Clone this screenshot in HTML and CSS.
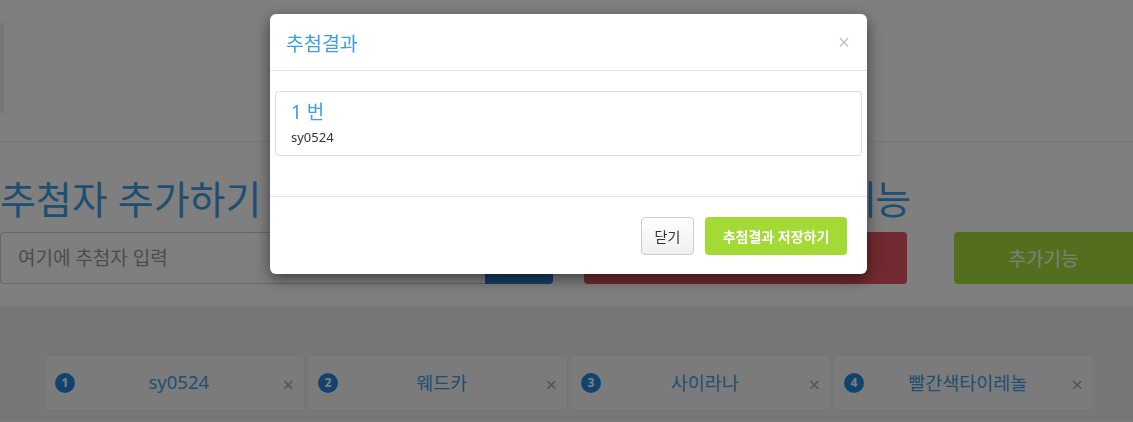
FILE: index.html
```html
<!DOCTYPE html>
<html lang="ko">

<head>
    <meta charset="UTF-8">
    <meta name="viewport" content="width=device-width, initial-scale=1.0">
    <title>추첨기</title>
    <link rel="stylesheet" href="styles.css">
</head>

<body>

    <div class="top-area">
        <div class="side-tab"></div>
    </div>

    <div class="controls">
        <div class="col col-left">
            <h1>추첨자 추가하기</h1>
            <div class="input-group">
                <input type="text" class="name-input" placeholder="여기에 추첨자 입력">
                <button class="add-button"></button>
            </div>
        </div>
        <div class="col col-right">
            <h1 class="tight">추첨하기 및 추가기능</h1>
            <div class="button-row">
                <button class="draw-button"></button>
                <button class="extra-button">추가기능</button>
            </div>
        </div>
    </div>

    <div class="list-panel">
        <div class="card-row">
            <div class="card"><span class="badge">1</span><span class="name">sy0524</span><span class="remove">&times;</span></div>
            <div class="card"><span class="badge">2</span><span class="name">웨드카</span><span class="remove">&times;</span></div>
            <div class="card"><span class="badge">3</span><span class="name">사이라나</span><span class="remove">&times;</span></div>
            <div class="card"><span class="badge">4</span><span class="name">빨간색타이레놀</span><span class="remove">&times;</span></div>
        </div>
    </div>

    <div class="backdrop"></div>

    <div class="modal">
        <div class="modal-header">
            <h4 class="modal-title">추첨결과</h4>
            <span class="close">&times;</span>
        </div>
        <div class="modal-body">
            <div class="result-panel">
                <div class="result-rank">1 번</div>
                <div class="result-name">sy0524</div>
            </div>
        </div>
        <div class="modal-footer">
            <button class="btn-close">닫기</button>
            <button class="btn-save">추첨결과 저장하기</button>
        </div>
    </div>

</body>

</html>
```

FILE: styles.css
```css
body {
    font-family: "Noto Sans", "Noto Sans CJK KR", sans-serif;
    background-color: #fff;
    margin: 0;
    padding: 0;
    height: 422px;
    overflow: hidden;
}

.top-area {
    height: 142px;
    border-bottom: 1px solid #ededed;
    padding-top: 23px;
    box-sizing: border-box;
}

.side-tab {
    width: 4px;
    height: 90px;
    background-color: #ececec;
}

.controls {
    display: flex;
    gap: 31px;
    padding-top: 36px;
}

.col-left {
    width: 553px;
}

.col-right {
    flex: 1;
}

h1 {
    margin: 0 0 11px 0;
    font-size: 39px;
    font-weight: 400;
    line-height: 1.1;
    color: #3d9fe6;
    white-space: nowrap;
}

h1.tight {
    letter-spacing: -1.6px;
}

.input-group {
    display: flex;
    height: 52px;
}

.name-input {
    flex: 1;
    border: 1px solid #ccc;
    border-right: none;
    border-radius: 4px 0 0 4px;
    padding: 0 17px;
    font-family: inherit;
    font-size: 19px;
    color: #555;
    outline: none;
}

.name-input::placeholder {
    color: #999;
}

.add-button {
    width: 68px;
    border: none;
    border-radius: 0 4px 4px 0;
    background-color: #2a7cc6;
}

.button-row {
    display: flex;
    gap: 47px;
    height: 52px;
}

.draw-button,
.extra-button {
    border: none;
    border-radius: 4px;
    font-family: inherit;
    font-size: 19px;
    color: #fff;
}

.draw-button {
    width: 323px;
    background-color: #e3545e;
}

.extra-button {
    flex: 1;
    background-color: #a6df3c;
    border-radius: 4px 0 0 4px;
}

.list-panel {
    margin-top: 22px;
    background-color: #eeeeee;
    padding: 49px 0 0 44px;
    height: 66px;
}

.card-row {
    display: flex;
    gap: 2px;
}

.card {
    width: 261px;
    height: 56px;
    box-sizing: border-box;
    background-color: #f7f7f7;
    border: 1px solid #e8e8e8;
    border-radius: 3px;
    display: flex;
    align-items: center;
    padding: 0 10px;
}

.badge {
    width: 20px;
    height: 20px;
    border-radius: 50%;
    background-color: #2189dc;
    color: #fff;
    font-size: 12px;
    font-weight: 700;
    display: flex;
    align-items: center;
    justify-content: center;
    flex-shrink: 0;
}

.name {
    flex: 1;
    text-align: center;
    font-size: 18.5px;
    color: #3d9fe6;
    margin-top: -2px;
}

.remove {
    font-size: 20px;
    color: #aaa;
    margin-top: 4px;
}

.backdrop {
    position: fixed;
    top: 0;
    left: 0;
    right: 0;
    bottom: 0;
    background-color: rgba(0, 0, 0, 0.5);
}

.modal {
    position: absolute;
    top: 14px;
    left: 270px;
    width: 597px;
    background-color: #fff;
    border-radius: 6px;
    box-shadow: 0 5px 15px rgba(0, 0, 0, 0.5);
}

.modal-header {
    height: 57px;
    box-sizing: border-box;
    border-bottom: 1px solid #e5e5e5;
    display: flex;
    align-items: center;
    justify-content: space-between;
    padding: 0 15px 0 16px;
}

.modal-title {
    margin: 0;
    font-size: 19.5px;
    font-weight: 400;
    color: #3d9fe0;
}

.close {
    font-size: 21px;
    color: #c8c8c8;
    margin-right: 2px;
}

.modal-body {
    padding: 20px 5px;
}

.result-panel {
    border: 1px solid #ddd;
    border-radius: 4px;
    height: 65px;
    box-sizing: border-box;
    padding: 6px 15px;
    margin-bottom: 20px;
}

.result-rank {
    font-size: 19px;
    color: #3d9fe0;
    line-height: 28px;
}

.result-name {
    font-size: 13px;
    color: #333;
    line-height: 20px;
    margin-top: 1px;
}

.modal-footer {
    border-top: 1px solid #e5e5e5;
    padding: 20px;
    height: 78px;
    box-sizing: border-box;
    display: flex;
    justify-content: flex-end;
    gap: 11px;
}

.btn-close,
.btn-save {
    height: 38px;
    border-radius: 4px;
    font-family: inherit;
    font-size: 14px;
}

.btn-close {
    width: 53px;
    background: linear-gradient(#fff, #efefef);
    border: 1px solid #ccc;
    color: #333;
}

.btn-save {
    width: 142px;
    background-color: #a3da36;
    border: none;
    color: #fff;
    font-weight: 700;
}
```
